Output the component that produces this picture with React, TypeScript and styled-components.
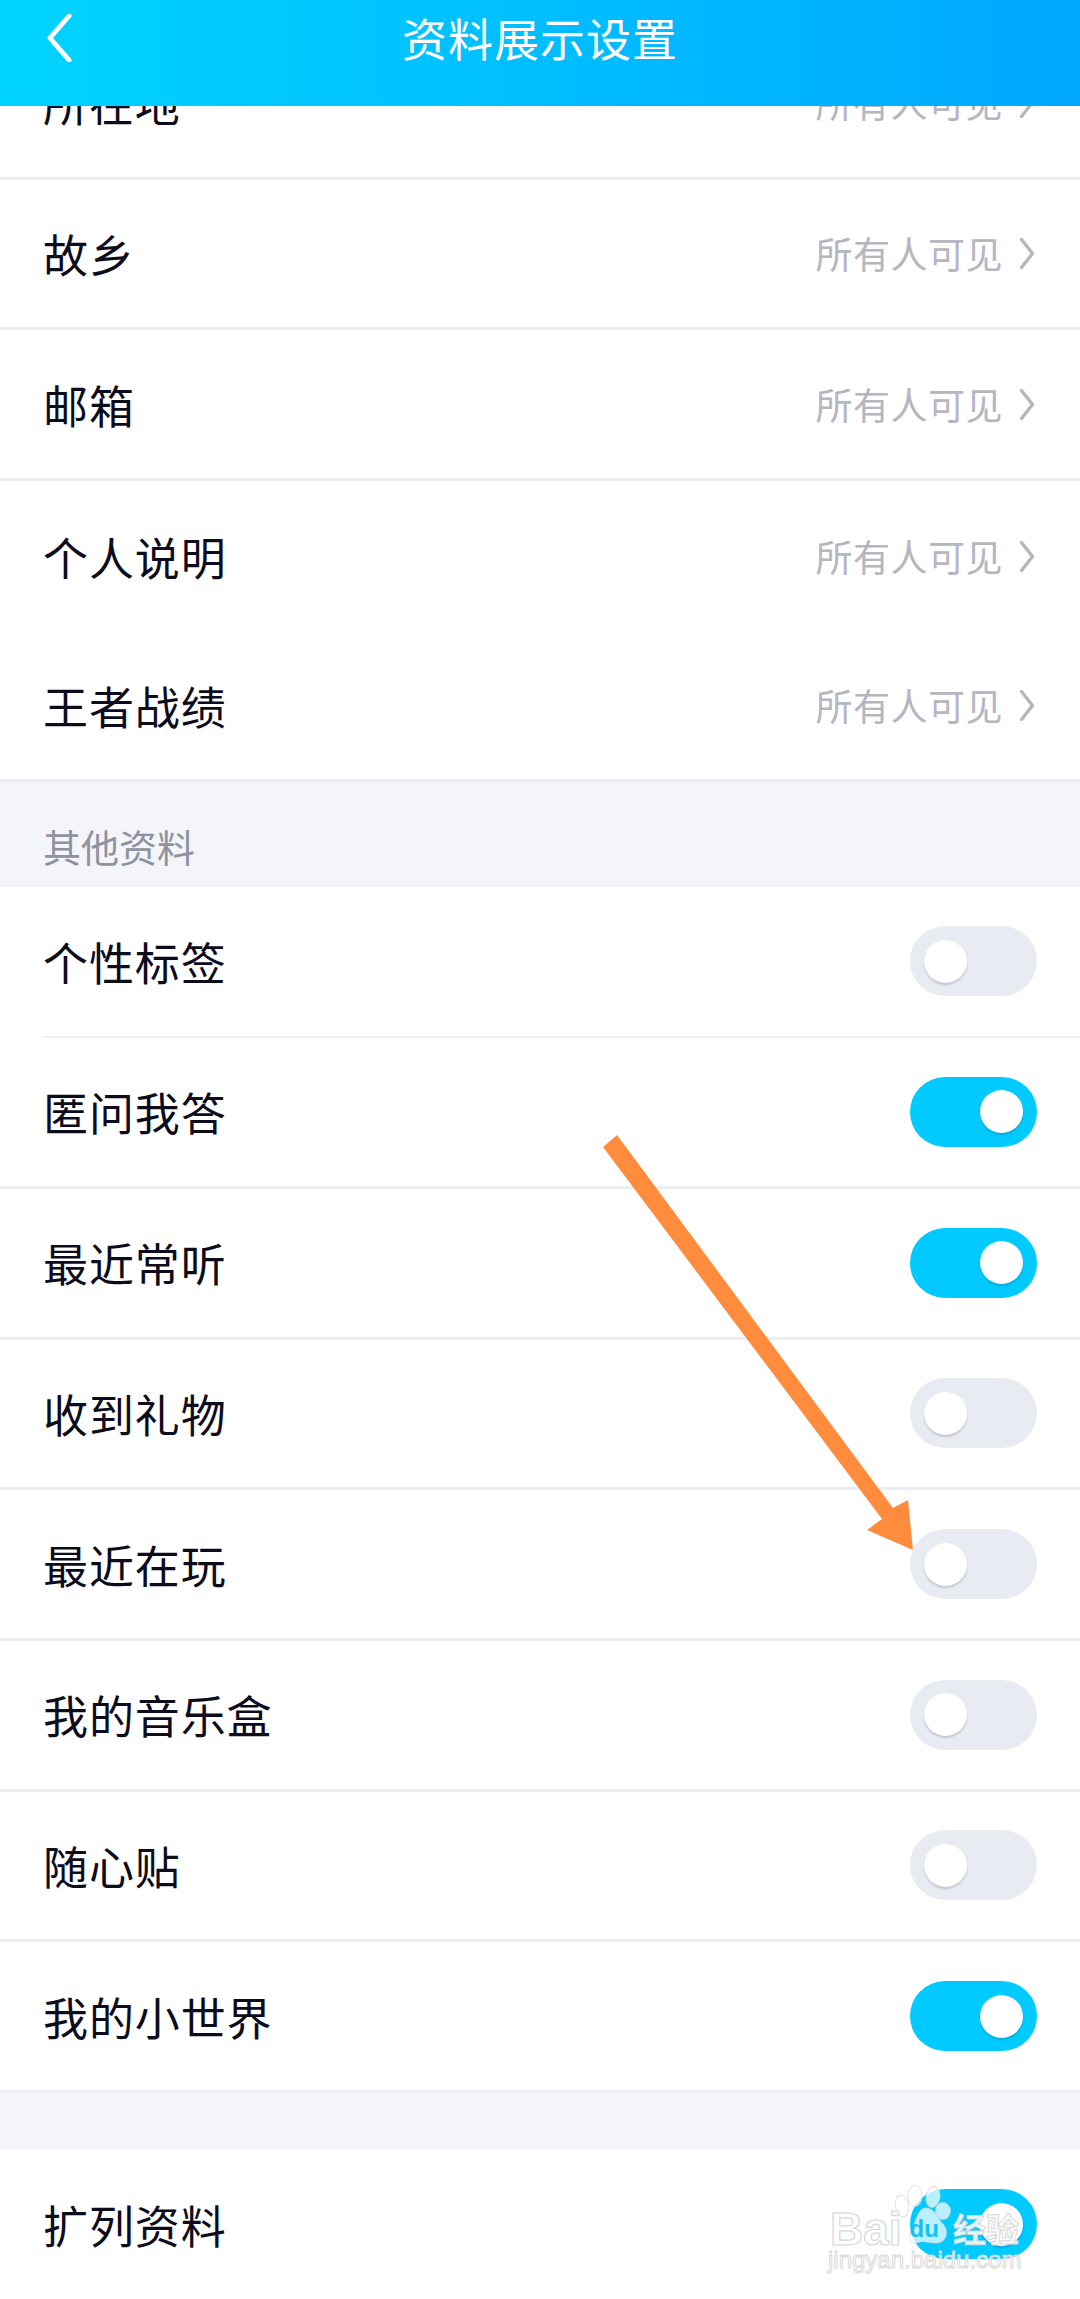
import React from 'react';
import styled, { createGlobalStyle } from 'styled-components';

const GlobalStyle = createGlobalStyle`
  html, body {
    margin: 0;
    padding: 0;
    background: #ffffff;
  }
  * {
    box-sizing: border-box;
  }
`;

const FONT = `"Noto Sans CJK SC", "Noto Sans", sans-serif`;

type Divider = 'full' | 'inset' | 'none';

const primaryRows: { label: string; divider: Divider }[] = [
  { label: '所在地', divider: 'full' },
  { label: '故乡', divider: 'full' },
  { label: '邮箱', divider: 'full' },
  { label: '个人说明', divider: 'none' },
  { label: '王者战绩', divider: 'full' },
];

const otherRows: { label: string; on: boolean; divider: Divider }[] = [
  { label: '个性标签', on: false, divider: 'inset' },
  { label: '匿问我答', on: true, divider: 'full' },
  { label: '最近常听', on: true, divider: 'full' },
  { label: '收到礼物', on: false, divider: 'full' },
  { label: '最近在玩', on: false, divider: 'full' },
  { label: '我的音乐盒', on: false, divider: 'full' },
  { label: '随心贴', on: false, divider: 'full' },
  { label: '我的小世界', on: true, divider: 'full' },
];

const App: React.FC = () => {
  return (
    <Page>
      <GlobalStyle />
      <Header>
        <BackIcon viewBox="0 0 26 50" aria-hidden="true">
          <path d="M23 2 L3 25 L23 48" fill="none" stroke="#ffffff" strokeWidth="5" strokeLinecap="round" strokeLinejoin="round" />
        </BackIcon>
        <Title>资料展示设置</Title>
      </Header>

      <List>
        {primaryRows.map((row) => (
          <Row key={row.label} $divider={row.divider}>
            <Label>{row.label}</Label>
            <ValueGroup>
              <Value>所有人可见</Value>
              <Chevron viewBox="0 0 16 32" aria-hidden="true">
                <path d="M2.5 2 L13.5 16 L2.5 30" fill="none" stroke="#b5b6c1" strokeWidth="3.4" strokeLinecap="round" strokeLinejoin="round" />
              </Chevron>
            </ValueGroup>
          </Row>
        ))}

        <SectionTitle>其他资料</SectionTitle>

        {otherRows.map((row) => (
          <Row key={row.label} $divider={row.divider}>
            <Label>{row.label}</Label>
            <Toggle $on={row.on}>
              <Knob />
            </Toggle>
          </Row>
        ))}

        <Gap />

        <Row $divider="none">
          <Label>扩列资料</Label>
          <Toggle $on>
            <Knob />
          </Toggle>
        </Row>
      </List>

      <Arrow viewBox="0 0 330 430" aria-hidden="true">
        <path d="M3 15 L17 3 L293 376 L308 368 L313 418 L267 398 L282 387 Z" fill="#ff8c3c" />
      </Arrow>

      <Watermark>
        <Paw viewBox="0 0 58 59" aria-hidden="true">
          <g fill="#ffffff" fillOpacity="0.72" stroke="#d4d4d4" strokeOpacity="0.7" strokeWidth="1">
            <ellipse cx="9" cy="21" rx="6.5" ry="11" transform="rotate(-10 9 21)" />
            <ellipse cx="22" cy="11" rx="7" ry="10.5" />
            <ellipse cx="40" cy="12" rx="7" ry="10.5" transform="rotate(10 40 12)" />
            <ellipse cx="50" cy="26" rx="7.5" ry="8.5" />
            <path d="M33 23 C42 23 44 33 50 39 C57 47 53 58 43 58 C36 58 30 55 24 58 C17 59 15 50 18 44 C24 38 24 23 33 23 Z" />
          </g>
        </Paw>
        <BrandLine>
          <BrandLatin>Bai</BrandLatin>
          <BrandInner>du</BrandInner>
          <BrandCjk>经验</BrandCjk>
        </BrandLine>
        <BrandUrl>jingyan.baidu.com</BrandUrl>
      </Watermark>
    </Page>
  );
};

export default App;

const Page = styled.div`
  position: relative;
  width: 1080px;
  height: 2299px;
  overflow: hidden;
  background: #ffffff;
  font-family: ${FONT};
`;

const Header = styled.header`
  position: absolute;
  top: 0;
  left: 0;
  z-index: 2;
  width: 100%;
  height: 106px;
  padding-bottom: 32px;
  display: flex;
  align-items: center;
  justify-content: center;
  background: linear-gradient(90deg, #00d4ff 0%, #00a8ff 100%);
`;

const BackIcon = styled.svg`
  position: absolute;
  left: 47px;
  top: 14px;
  width: 25px;
  height: 48px;
`;

const Title = styled.h1`
  margin: 0;
  color: #ffffff;
  font-size: 45px;
  font-weight: 400;
  line-height: 1;
  letter-spacing: 1px;
`;

const List = styled.main`
  display: flex;
  flex-direction: column;
  padding-top: 29px;
`;

const dividerBorder = { full: '3px solid #eceef3', inset: '3px solid transparent', none: '0' };

const Row = styled.div<{ $divider: Divider }>`
  position: relative;
  flex: none;
  height: 150.7px;
  padding: 0 43px;
  display: flex;
  align-items: center;
  justify-content: space-between;
  border-bottom: ${({ $divider }) => dividerBorder[$divider]};

  &::after {
    content: '';
    display: ${({ $divider }) => ($divider === 'inset' ? 'block' : 'none')};
    position: absolute;
    left: 42px;
    right: 0;
    bottom: -3px;
    height: 2px;
    background: #f0f1f5;
  }
`;

const Label = styled.span`
  color: #0c0c1c;
  font-size: 45px;
  line-height: 1;
  letter-spacing: 0.9px;
`;

const ValueGroup = styled.div`
  display: flex;
  align-items: center;
  gap: 16px;
`;

const Value = styled.span`
  color: #b5b6c1;
  font-size: 37px;
  line-height: 1;
  letter-spacing: 0.5px;
`;

const Chevron = styled.svg`
  width: 16px;
  height: 33px;
  margin-right: 2px;
`;

const SectionTitle = styled.h2`
  flex: none;
  margin: 0;
  height: 105px;
  padding: 22px 43px 0;
  display: flex;
  align-items: center;
  background: #f4f5f9;
  color: #8f92a0;
  font-size: 38px;
  font-weight: 400;
  line-height: 1;
`;

const Toggle = styled.div<{ $on?: boolean }>`
  flex: none;
  width: 127px;
  height: 70px;
  padding: 0 14px;
  display: flex;
  align-items: center;
  justify-content: ${({ $on }) => ($on ? 'flex-end' : 'flex-start')};
  border-radius: 35px;
  background: ${({ $on }) => ($on ? '#00caff' : '#e8ebf2')};
`;

const Knob = styled.div`
  width: 43px;
  height: 43px;
  border-radius: 50%;
  background: #ffffff;
  box-shadow: 0 2px 2px rgba(40, 50, 80, 0.2);
`;

const Gap = styled.div`
  flex: none;
  height: 56px;
  background: #f4f5f9;
`;

const Arrow = styled.svg`
  position: absolute;
  left: 600px;
  top: 1132px;
  width: 330px;
  height: 430px;
`;

const Watermark = styled.div`
  position: absolute;
  left: 828px;
  top: 2180px;
  width: 200px;
  height: 100px;
  display: flex;
  flex-direction: column;
`;

const Paw = styled.svg`
  position: absolute;
  left: 65px;
  top: 5px;
  width: 58px;
  height: 59px;
`;

const BrandLine = styled.div`
  position: relative;
  height: 68px;
  padding: 26px 0 0 2px;
  display: flex;
  align-items: flex-start;
`;

const BrandLatin = styled.span`
  color: rgba(255, 255, 255, 0.8);
  -webkit-text-stroke: 1.2px #d6d6d6;
  font-family: "Liberation Sans", sans-serif;
  font-size: 46px;
  font-weight: 700;
  line-height: 1;
`;

const BrandInner = styled.span`
  margin: 11px 0 0 8px;
  color: #19c0ee;
  font-family: "Liberation Sans", sans-serif;
  font-size: 24px;
  font-weight: 700;
  line-height: 1;
`;

const BrandCjk = styled.span`
  position: absolute;
  left: 125px;
  top: 32px;
  color: rgba(255, 255, 255, 0.9);
  -webkit-text-stroke: 1px #d6d6d6;
  font-size: 33px;
  font-weight: 700;
  line-height: 1;
  white-space: nowrap;
`;

const BrandUrl = styled.span`
  position: relative;
  color: rgba(255, 255, 255, 0.75);
  -webkit-text-stroke: 1px #d8d8d8;
  font-family: "Liberation Sans", sans-serif;
  font-size: 24px;
  line-height: 1;
  white-space: nowrap;
`;
